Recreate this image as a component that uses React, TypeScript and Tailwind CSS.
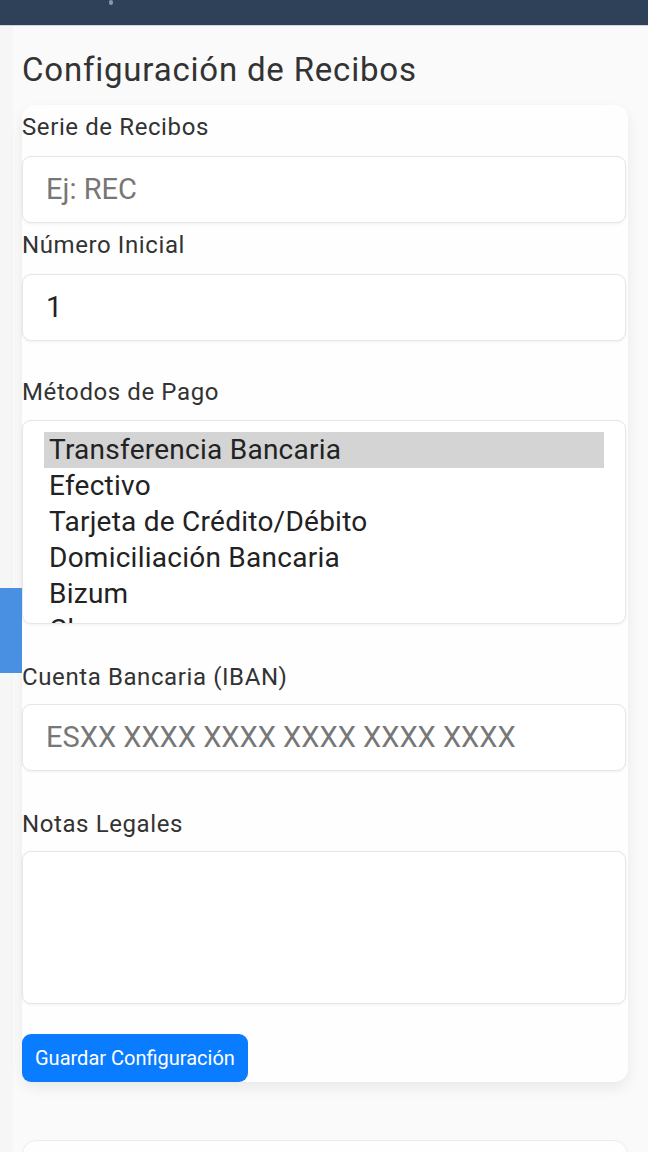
import React from "react";

const font = { fontFamily: "Roboto, 'Noto Sans', 'Liberation Sans', sans-serif" };

function Label({ children, className = "" }: { children: React.ReactNode; className?: string }) {
  return <div className={`text-[24px] leading-[26px] tracking-[0.6px] text-[#333] ${className}`}>{children}</div>;
}

function Input({ text, placeholder }: { text: string; placeholder?: boolean }) {
  return (
    <div
      className={`h-[67px] rounded-[9px] border border-[#e6e6e6] bg-white shadow-[0_1px_3px_rgba(0,0,0,0.06)] flex items-center pl-[23px] text-[29px] ${
        placeholder ? "text-[#777]" : "text-[#222]"
      }`}
    >
      {text}
    </div>
  );
}

export default function App() {
  const options = [
    "Transferencia Bancaria",
    "Efectivo",
    "Tarjeta de Crédito/Débito",
    "Domiciliación Bancaria",
    "Bizum",
    "Cheque",
  ];
  return (
    <div className="relative w-[648px] h-[1152px] overflow-hidden bg-[#f6f6f7]" style={font}>
      <div className="relative h-[26px] bg-[#2e4158] border-b border-[#cfd6de]">
        <div className="absolute left-[109px] top-0 w-[4px] h-[5px] rounded-full bg-[#8a96a6]" />
      </div>
      <div className="ml-[13px] bg-[#fafafa] h-full">
        <h2 className="pt-[26px] pl-[9px] text-[33px] leading-[36px] tracking-[0.8px] text-[#333] font-normal">
          Configuración de Recibos
        </h2>
        <div className="mt-[17px] ml-[9px] w-[606px] rounded-[14px] bg-[#fefefe] shadow-[0_6px_14px_rgba(0,0,0,0.07)] pr-[2px]">
          <Label className="pt-[9px]">Serie de Recibos</Label>
          <div className="mt-[16px]">
            <Input text="Ej: REC" placeholder />
          </div>
          <Label className="mt-[9px]">Número Inicial</Label>
          <div className="mt-[16px]">
            <Input text="1" />
          </div>
          <Label className="mt-[38px]">Métodos de Pago</Label>
          <div className="mt-[15px] h-[204px] overflow-hidden rounded-[9px] border border-[#e6e6e6] bg-white shadow-[0_1px_3px_rgba(0,0,0,0.06)] pt-[11px] px-[21px]">
            {options.map((o, i) => (
              <div
                key={o}
                className={`h-[36px] leading-[36px] pl-[5px] text-[28px] tracking-[0.25px] text-[#222] ${i === 0 ? "bg-[#d4d4d4]" : ""}`}
              >
                {o}
              </div>
            ))}
          </div>
          <Label className="mt-[40px]">Cuenta Bancaria (IBAN)</Label>
          <div className="mt-[14px]">
            <Input text="ESXX XXXX XXXX XXXX XXXX XXXX" placeholder />
          </div>
          <Label className="mt-[40px]">Notas Legales</Label>
          <div className="mt-[14px] h-[153px] rounded-[9px] border border-[#e6e6e6] bg-white shadow-[0_1px_3px_rgba(0,0,0,0.06)]" />
          <button className="mt-[30px] h-[48px] px-[13px] rounded-[9px] bg-[#0a7cff] text-white text-[20px] leading-[48px]">
            Guardar Configuración
          </button>
        </div>
        <div className="mt-[58px] ml-[9px] w-[606px] h-[60px] rounded-[14px] bg-[#fefefe] border border-[#ececec]" />
      </div>
      <div className="absolute left-0 top-[588px] w-[22px] h-[85px] bg-[#4a90e2]" />
    </div>
  );
}
